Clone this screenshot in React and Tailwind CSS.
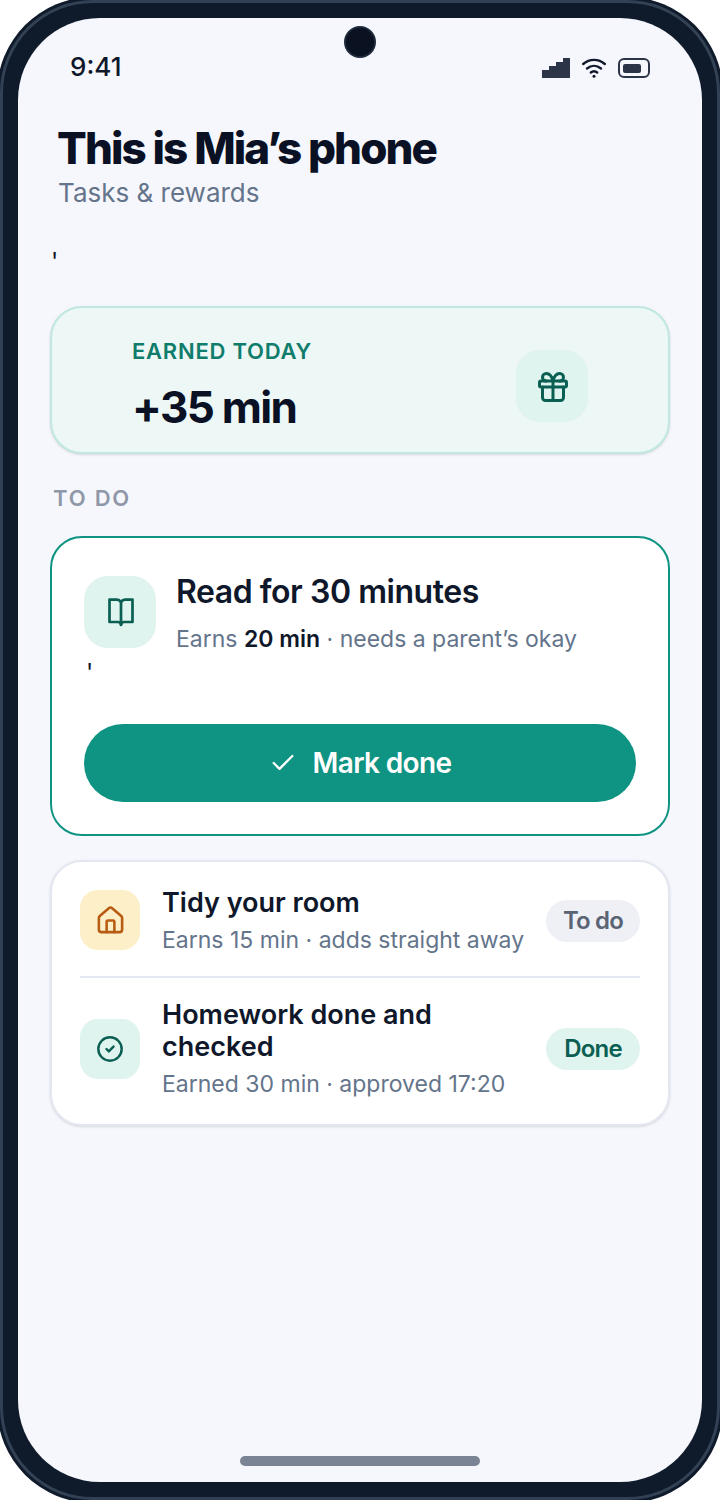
import React from "react";
import { Check, CircleCheck, Gift, House } from "lucide-react";

function StatusBar() {
  return (
    <div className="relative flex h-[60px] items-start justify-between px-[52px] pt-[31px]">
      <span className="text-[26px] leading-[35px] font-medium text-[#0f172a]">9:41</span>
      <div className="absolute left-1/2 top-[8px] h-8 w-8 -translate-x-1/2 rounded-full border-2 border-[#1e293b] bg-[#0a1120]" />
      <div className="flex items-center gap-[12px] pt-[9px]">
        <svg width="28" height="20" viewBox="0 0 28 20" fill="#2c3547">
          <path d="M0 20V12H7V8H14V4H21V0H28V20Z" />
        </svg>
        <svg width="24" height="20" viewBox="0 0 24 20" fill="none" stroke="#0f172a" strokeWidth="2.400" strokeLinecap="round">
          <path d="M1.200 6C7.500 0.500 16.500 0.500 22.800 6" />
          <path d="M5 10.500C9.200 7 14.800 7 19 10.500" />
          <path d="M8.800 14.500C10.700 13 13.300 13 15.200 14.500" />
          <circle cx="12" cy="18.200" r="1.500" fill="#0f172a" stroke="none" />
        </svg>
        <div className="flex h-5 w-8 items-center rounded-[6px] border-2 border-[#2c3547] pl-[3px]">
          <div className="h-[9px] w-[18px] rounded-[2px] bg-[#2c3547]" />
        </div>
      </div>
    </div>
  );
}

function BookIcon() {
  return (
    <svg className="ml-[1px]" width="32" height="32" viewBox="0 0 32 32" fill="none" stroke="#0b5f52" strokeWidth="2.700" strokeLinejoin="round" strokeLinecap="round">
      <path d="M16 6C15 4.500 13.500 3.600 12 3.600H4.500V26H13C14.500 26 16 27 16 29C16 27 17.500 26 19 26H27.500V3.600H20C18.500 3.600 17 4.500 16 6Z" />
      <path d="M16 6V28.500" />
    </svg>
  );
}

function TaskRow({ icon, iconBg, title, sub, pill, pillClass, className, textClass, pillOffset }) {
  return (
    <div className={`flex items-center ${className}`}>
      <div className={`flex h-[60px] w-[60px] shrink-0 items-center justify-center rounded-[18px] ${iconBg}`}>{icon}</div>
      <div className={`ml-[22px] w-[384px] ${textClass}`}>
        <div className="text-[27px] leading-8 font-semibold text-[#0f172a]">{title}</div>
        <div className="mt-[5px] text-[23px] leading-8 text-[#64748b]">{sub}</div>
      </div>
      <span className={`ml-auto flex h-[42px] w-[94px] items-center justify-center rounded-full text-[24px] font-semibold tracking-[-0.800px] ${pillClass} ${pillOffset}`}>{pill}</span>
    </div>
  );
}

export default function App() {
  return (
    <div className="h-[1500px] w-[720px] overflow-hidden bg-white font-['Inter',sans-serif]">
      <div className="relative -m-[3px] h-[1506px] w-[726px] rounded-[96px] bg-[#0f1a2b] p-[21px]">
        <div className="pointer-events-none absolute inset-[3px] rounded-[93px] border-[3px] border-[#334155]" />
        <div className="flex h-full flex-col rounded-[82px] bg-[#f6f7fc]">
          <StatusBar />

          <div className="px-[32px]">
            <div className="pl-[7px] pt-[42px]">
              <h1 className="text-[44px] leading-[56px] font-extrabold tracking-[-1.900px] text-[#0a1124]">This is Mia’s phone</h1>
              <p className="pl-[1px] pt-[1px] text-[26px] leading-8 text-[#64748b]">Tasks &amp; rewards</p>
            </div>
            <div className="mt-[37px] h-8 pl-[1px] text-[24px] leading-8 text-[#0f172a]">'</div>

            <section className="mt-[28px] flex h-[148px] items-center justify-between rounded-[32px] border-2 border-[#c0e8e0] bg-[#edf7f5] px-[80px] shadow-sm">
              <div className="pt-[10px]">
                <div className="text-[22px] leading-7 font-semibold tracking-[0.750px] text-[#0f7c6c]">EARNED TODAY</div>
                <div className="mt-[16px] text-[44px] leading-[52px] font-bold tracking-[-1.700px] text-[#0a1124]">+35 min</div>
              </div>
              <div className="mt-[12px] flex h-[72px] w-[72px] items-center justify-center rounded-[24px] bg-[#dff3ef] pl-[2px] pt-[2px]">
                <Gift size={36} color="#0b5f52" strokeWidth={2} />
              </div>
            </section>

            <div className="mt-[30px] pl-[3px] text-[22px] leading-7 font-semibold tracking-[1.800px] text-[#8f98a8]">TO DO</div>

            <section className="mt-[24px] h-[300px] rounded-[32px] border-2 border-[#0f9382] bg-white px-[32px] pt-[38px]">
              <div className="flex">
                <div className="flex h-[72px] w-[72px] shrink-0 items-center justify-center rounded-[24px] bg-[#dff3ef]">
                  <BookIcon />
                </div>
                <div className="ml-[20px]">
                  <div className="text-[32px] leading-[32px] font-semibold tracking-[-0.450px] text-[#0f172a]">Read for 30 minutes</div>
                  <div className="mt-[15px] text-[23px] leading-8 text-[#64748b]">
                    Earns <b className="font-semibold text-[#0f172a]">20 min</b> · needs a parent’s okay
                  </div>
                </div>
              </div>
              <div className="mt-[2px] h-8 pl-[2px] text-[24px] leading-8 text-[#0f172a]">'</div>
              <button className="mt-[35px] flex h-[78px] w-full items-center justify-center gap-[16px] rounded-full bg-[#0f9382] text-[28px] font-semibold tracking-[-0.650px] text-white">
                <Check size={28} strokeWidth={2} />
                Mark done
              </button>
            </section>

            <section className="mt-[24px] rounded-[32px] border-2 border-[#e3e7f1] bg-white px-[28px] shadow-sm">
              <TaskRow
                className="h-[116px] border-b-2 border-[#e3e7f1] pt-[2px]"
                icon={<House size={31} color="#b85c14" strokeWidth={2} />}
                iconBg="bg-[#fdefc8]"
                title="Tidy your room"
                sub="Earns 15 min · adds straight away"
                textClass="pt-[2px]"
                pill="To do"
                pillClass="bg-[#eef0f5] text-[#5b6475]"
                pillOffset="mt-[1px]"
              />
              <TaskRow
                className="h-[146px] pb-1"
                icon={<CircleCheck size={28} color="#0b5f52" strokeWidth={2.100} />}
                iconBg="bg-[#dff3ef]"
                title="Homework done and checked"
                sub="Earned 30 min · approved 17:20"
                textClass="pt-[1px]"
                pill="Done"
                pillClass="bg-[#dff3ef] text-[#0b5f52]"
                pillOffset=""
              />
            </section>
          </div>

          <div className="mt-auto mb-[16px] h-[10px] w-[240px] self-center rounded-full bg-[#7b8494]" />
        </div>
      </div>
    </div>
  );
}
